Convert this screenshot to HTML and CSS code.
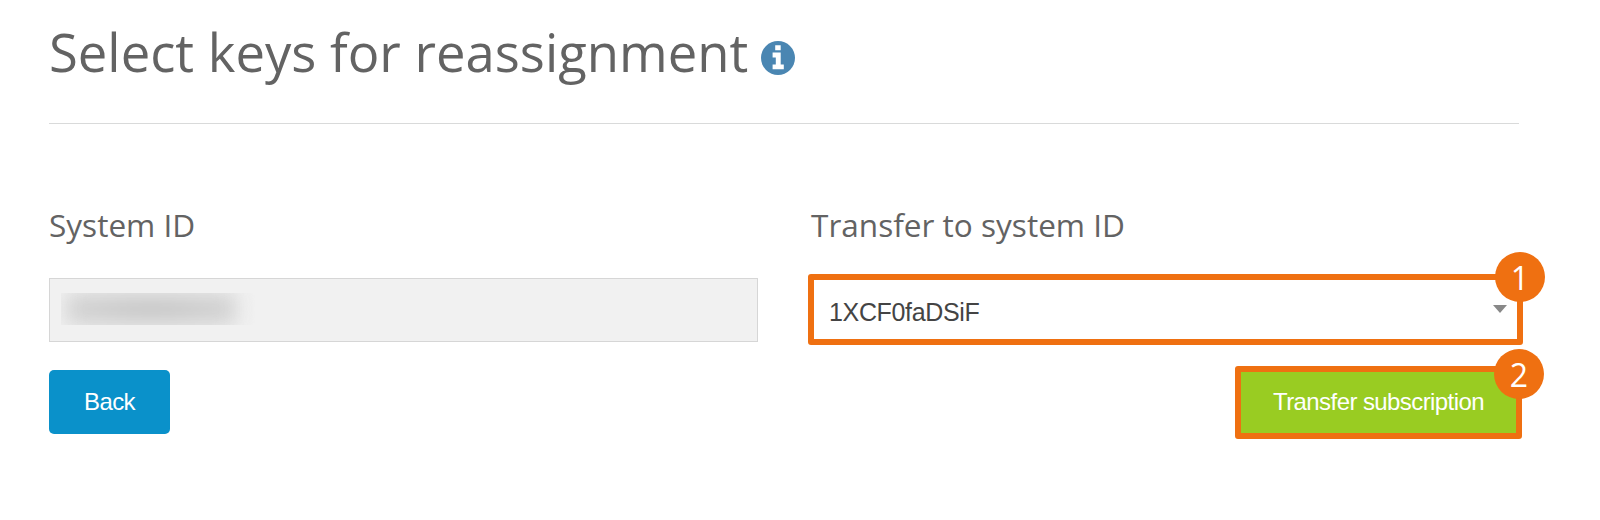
FILE: index.html
```html
<!DOCTYPE html>
<html lang="en">
<head>
<meta charset="utf-8">
<title>Select keys for reassignment</title>
<link rel="stylesheet" href="styles.css">
</head>
<body>
<main class="page">
  <header class="page-header">
    <h1 class="title">Select keys for reassignment</h1>
    <svg class="info-icon" viewBox="0 0 34 34" role="img" aria-label="Info">
      <circle cx="17" cy="17" r="17" fill="#4a86b2"/>
      <path fill="#fff" d="M14.2 4.3h5.5v5h-5.5zM11.6 11.6h8.1v11.8h3.1v4.9H11.6v-4.9h3.2v-6.8h-3.2z"/>
    </svg>
  </header>
  <form class="form">
    <section class="column">
      <h2 class="label">System ID</h2>
      <div class="field"><span class="redacted"></span></div>
      <button class="button back" type="button">Back</button>
    </section>
    <section class="column target">
      <h2 class="label">Transfer to system ID</h2>
      <div class="select highlight">
        <span class="value">1XCF0faDSiF</span>
        <svg class="caret" viewBox="0 0 14 8"><path d="M0 0h14L7 8z" fill="#888"/></svg>
        <span class="badge">1</span>
      </div>
      <button class="button transfer highlight" type="button"><span class="transfer-text">Transfer subscription</span><span class="badge">2</span></button>
    </section>
  </form>
</main>
</body>
</html>
```
FILE: styles.css
```css
* { box-sizing: border-box; }
body {
  margin: 0;
  background: #fff;
  color: #636363;
  font-family: "Open Sans", sans-serif;
}
.page { width: 1600px; height: 520px; padding: 0 49px; overflow: hidden; }
.page-header {
  display: flex;
  align-items: flex-start;
  width: 1470px;
  height: 124px;
  border-bottom: 1px solid #d9dada;
}
.title {
  width: 699px;
  margin: 15px 0 0;
  font-size: 52.6px;
  line-height: 73px;
  font-weight: 400;
  white-space: nowrap;
}
.info-icon { width: 34px; height: 34px; margin: 41px 0 0 13px; flex: none; }
.form {
  display: grid;
  grid-template-columns: 709px 715px;
  column-gap: 50px;
  padding-top: 80px;
}
.column { display: flex; flex-direction: column; align-items: flex-start; }
.label {
  margin: 0;
  height: 74px;
  font-size: 31.55px;
  line-height: 41px;
  font-weight: 400;
  white-space: nowrap;
}
.target .label { height: 70px; padding-left: 3px; }
.field {
  width: 709px;
  height: 64px;
  padding: 14px 11px;
  border: 1px solid #d6d6d6;
  background: #f1f1f1;
}
.redacted {
  display: block;
  width: 198px;
  height: 32px;
  overflow: hidden;
}
.redacted::before {
  content: "";
  display: block;
  width: 170px;
  height: 32px;
  margin-left: 5px;
  background: radial-gradient(ellipse at center, #c3c3c3, #d3d3d3 75%);
  filter: blur(10px);
}
.button {
  padding: 0;
  border: 0;
  color: #fff;
  font: 24px "Liberation Sans", Arial, sans-serif;
  letter-spacing: -0.58px;
}
.back {
  width: 121px;
  height: 64px;
  margin-top: 28px;
  border-radius: 5px;
  background: #0a91ca;
}
.highlight { position: relative; border: 6px solid #ef7011; border-radius: 3px; }
.select {
  display: flex;
  align-items: center;
  justify-content: space-between;
  width: 715px;
  height: 71px;
  padding: 5px 10px 0 15px;
  color: #444;
  font: 25px "Liberation Sans", Arial, sans-serif;
  letter-spacing: -0.35px;
}
.caret { width: 14px; height: 8px; margin-bottom: 6px; }
.transfer {
  align-self: flex-end;
  width: 287px;
  height: 73px;
  margin: 21px 1px 0 0;
  padding-bottom: 2px;
  background: #9c2;
}
.badge {
  position: absolute;
  top: -28px;
  right: -28px;
  width: 50px;
  height: 50px;
  border-radius: 50%;
  background: #ef7011;
  color: #fff;
  font: 400 32px/51px "Open Sans", sans-serif;
  letter-spacing: 0;
  text-align: center;
}
.transfer .badge { top: -23px; }
```
